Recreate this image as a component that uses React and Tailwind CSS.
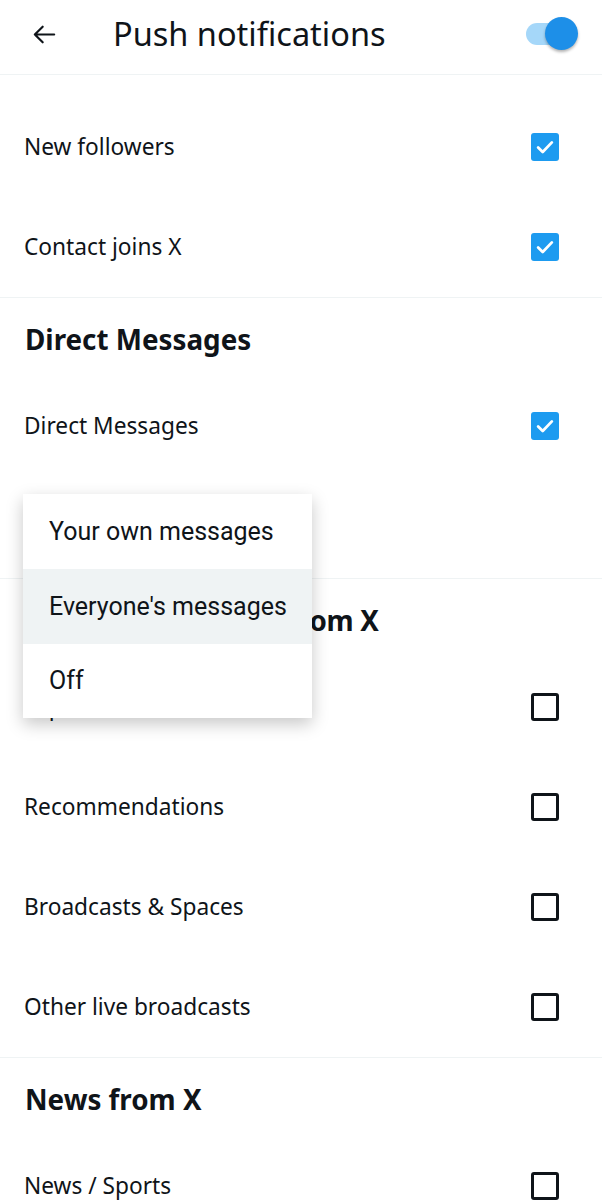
import React from "react";

const font = { fontFamily: "'Noto Sans', Roboto, sans-serif" };
const menuFont = { fontFamily: "Roboto, 'Noto Sans', sans-serif" };

function Checked() {
  return (
    <div className="w-[28px] h-[28px] rounded-[3px] bg-[#1d9bf0] flex items-center justify-center">
      <svg width="22" height="22" viewBox="0 0 24 24" fill="none">
        <path d="M4.5 12.5l5 5L19.5 7" stroke="white" strokeWidth="3" strokeLinecap="round" strokeLinejoin="round" />
      </svg>
    </div>
  );
}

function Unchecked() {
  return <div className="w-[28px] h-[28px] rounded-[3px] border-[3px] border-[#0f1419]" />;
}

function Row({ label, checked }) {
  return (
    <div className="h-[100px] flex items-center justify-between pl-[24px] pr-[43px]">
      <span className="text-[22.7px] text-[#0f1419]">{label}</span>
      {checked === undefined ? null : checked ? <Checked /> : <Unchecked />}
    </div>
  );
}

function Heading({ children, tight }) {
  return (
    <div className="h-[78px] pt-[5px] flex items-center pl-[25px]">
      <span className={tight ? "text-[27.8px] font-bold text-[#0f1419] tracking-[-0.3px]" : "text-[27.8px] font-bold text-[#0f1419]"}>{children}</span>
    </div>
  );
}

export default function App() {
  return (
    <div className="relative w-[602px] h-[1200px] bg-white overflow-hidden" style={font}>
      {/* header */}
      <div className="h-[75px] pb-[6px] flex items-center border-b border-[#eff3f4]">
        <div className="w-[113px] pl-[30px] flex items-center">
          <svg width="29" height="29" viewBox="0 0 24 24" fill="none">
            <path d="M20 12H4M10.5 5.5L4 12l6.5 6.5" stroke="#0f1419" strokeWidth="1.8" strokeLinecap="round" strokeLinejoin="round" />
          </svg>
        </div>
        <span className="text-[32.5px] text-[#0f1419] flex-1">Push notifications</span>
        <div className="relative w-[52px] h-[34px] mr-[24px] flex items-center">
          <div className="w-[46px] h-[22px] rounded-full bg-[#a5d7f9]" />
          <div className="absolute right-0 top-0 w-[33px] h-[33px] rounded-full bg-[#1d8fe8] shadow-[0_2px_3px_rgba(0,0,0,0.3)]" />
        </div>
      </div>
      <div className="pt-[22px] border-b border-[#eff3f4]">
        <Row label="New followers" checked />
        <Row label="Contact joins X" checked />
      </div>
      <div className="pb-[2px] border-b border-[#eff3f4]">
        <Heading>Direct Messages</Heading>
        <Row label="Direct Messages" checked />
        <Row label="Message preview" />
      </div>
      <div className="border-b border-[#eff3f4]">
        <Heading tight>Trends &amp; moments from X</Heading>
        <Row label="Topics" checked={false} />
        <Row label="Recommendations" checked={false} />
        <Row label="Broadcasts & Spaces" checked={false} />
        <Row label="Other live broadcasts" checked={false} />
      </div>
      <div>
        <Heading>News from X</Heading>
        <Row label="News / Sports" checked={false} />
      </div>

      {/* dropdown menu */}
      <div className="absolute left-[23px] top-[494px] w-[289px] bg-white shadow-[0_6px_16px_rgba(0,0,0,0.22)] flex flex-col" style={menuFont}>
        <div className="h-[75px] flex items-center pl-[26px] text-[25px] text-[#0f1419]">Your own messages</div>
        <div className="h-[75px] flex items-center pl-[26px] text-[25px] text-[#0f1419] bg-[#eff3f4]">Everyone's messages</div>
        <div className="h-[74px] flex items-center pl-[26px] text-[25px] text-[#0f1419]">Off</div>
      </div>
    </div>
  );
}
